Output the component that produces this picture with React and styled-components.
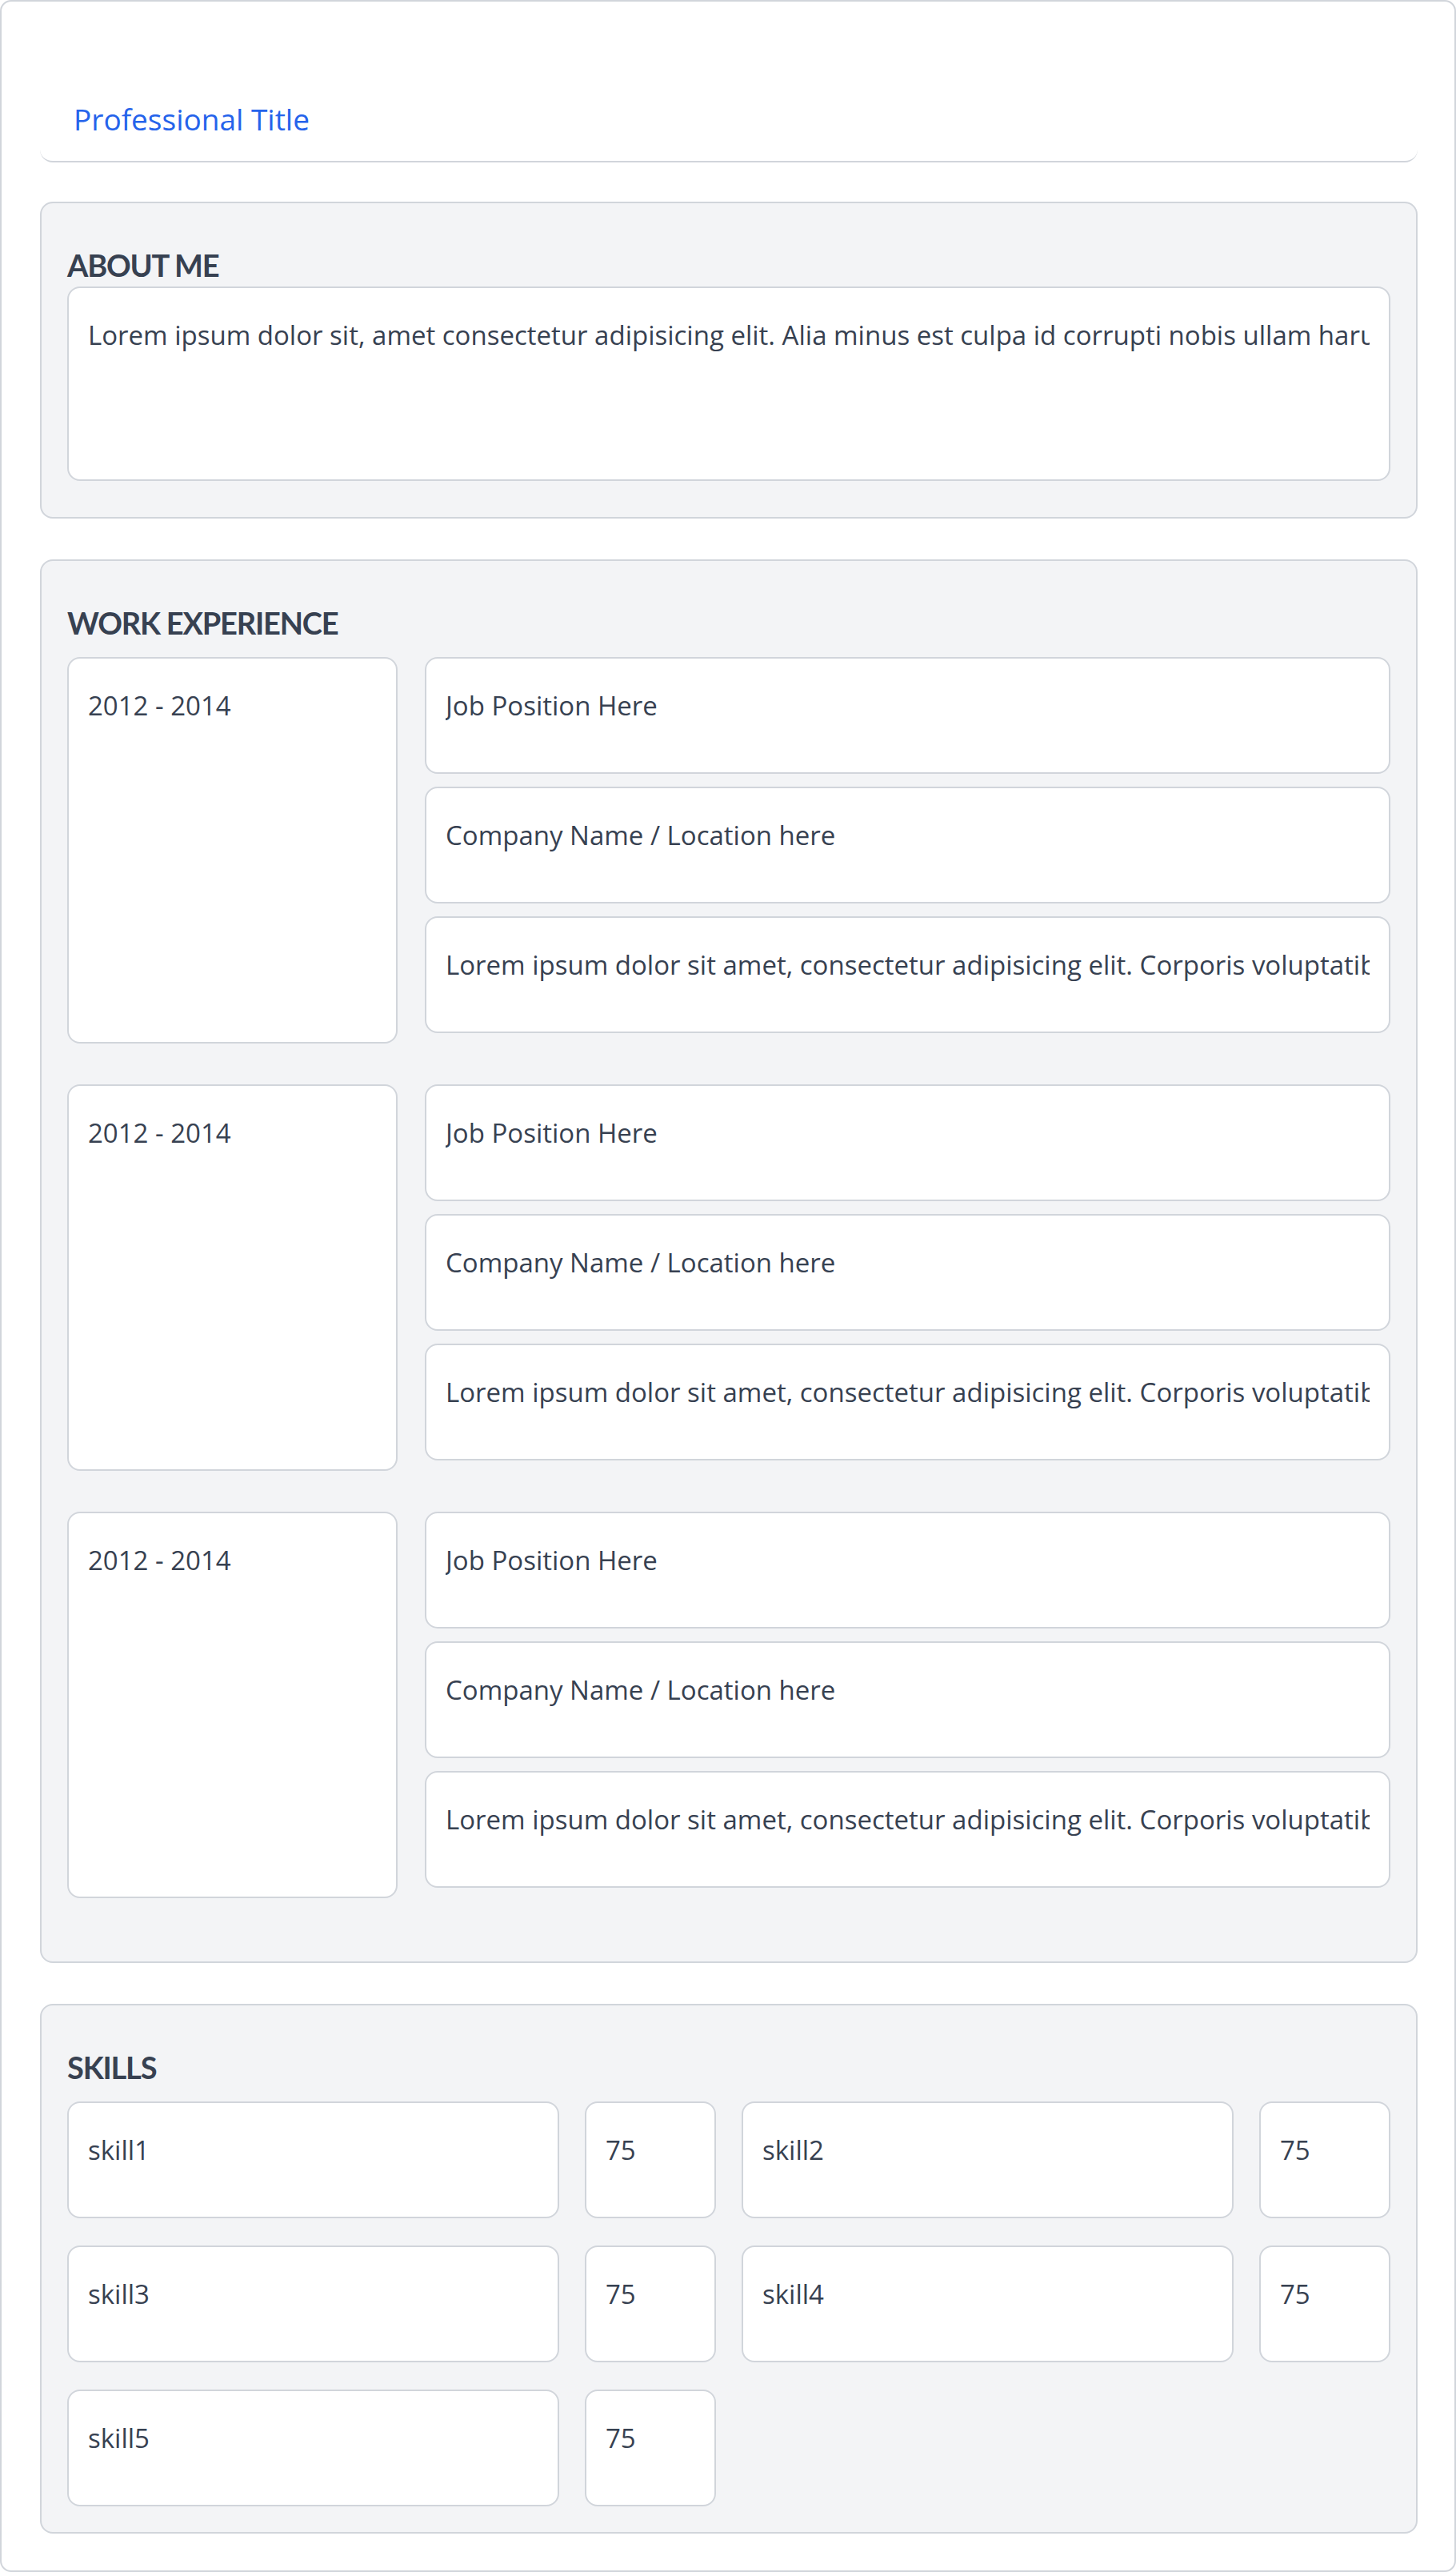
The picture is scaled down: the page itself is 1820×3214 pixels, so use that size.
import React from "react";
import styled, { createGlobalStyle } from "styled-components";

const GlobalStyle = createGlobalStyle`
  html, body {
    margin: 0;
    padding: 0;
    background: #ffffff;
  }
  body {
    font-family: "Open Sans", "Liberation Sans", sans-serif;
    color: #374151;
  }
`;

const Card = styled.div`
  box-sizing: border-box;
  width: 1820px;
  min-height: 3214px;
  border: 2px solid #d1d5db;
  border-radius: 14px;
  padding: 48px 46px 46px 48px;
  display: flex;
  flex-direction: column;
`;

const Header = styled.div`
  box-sizing: border-box;
  height: 153px;
  display: flex;
  align-items: flex-end;
  padding: 0 0 30px 42px;
  border-bottom: 2px solid #d1d5db;
  border-radius: 16px;
  margin-bottom: 49px;
`;

const Title = styled.div`
  font-size: 37px;
  line-height: 44px;
  color: #2563eb;
`;

const Section = styled.section`
  background: #f3f4f6;
  border: 2px solid #d1d5db;
  border-radius: 16px;
  padding: 32px;
  margin-bottom: 51px;

  &:last-child {
    margin-bottom: 0;
  }
`;

const Heading = styled.h2`
  margin: 21px 0 ${(p) => p.$gap - 1}px;
  font-family: Lato, "Open Sans", sans-serif;
  font-size: 38px;
  line-height: 48px;
  font-weight: 700;
  letter-spacing: -1.2px;
  color: #374151;
`;

const Field = styled.div`
  box-sizing: border-box;
  min-width: 0;
  height: ${(p) => (p.$h ? `${p.$h}px` : "auto")};
  background: #ffffff;
  border: 2px solid #d1d5db;
  border-radius: 16px;
  padding: 35px 24px 0;
  font-size: 33px;
  line-height: 48px;
  color: #374151;
  margin-bottom: ${(p) => p.$mb || 0}px;
`;

const FieldText = styled.div`
  white-space: nowrap;
  overflow: hidden;
`;

const Entry = styled.div`
  display: grid;
  grid-template-columns: 413px minmax(0, 1fr);
  column-gap: 34px;
  margin-bottom: 51px;

  &:last-child {
    margin-bottom: 47px;
  }
`;

const Stack = styled.div`
  min-width: 0;
  display: flex;
  flex-direction: column;
  gap: 16px;
`;

const SkillGrid = styled.div`
  display: grid;
  grid-template-columns: minmax(0, 1fr) 164px minmax(0, 1fr) 164px;
  column-gap: 32px;
  row-gap: 34px;
`;

const aboutText =
  "Lorem ipsum dolor sit, amet consectetur adipisicing elit. Alia minus est culpa id corrupti nobis ullam harum quae eveniet ratione.";
const jobText =
  "Lorem ipsum dolor sit amet, consectetur adipisicing elit. Corporis voluptatibus dolorum error quidem.";

const jobs = [1, 2, 3].map((id) => ({
  id,
  years: "2012 - 2014",
  position: "Job Position Here",
  company: "Company Name / Location here",
  desc: jobText,
}));

const skills = [
  { name: "skill1", level: 75 },
  { name: "skill2", level: 75 },
  { name: "skill3", level: 75 },
  { name: "skill4", level: 75 },
  { name: "skill5", level: 75 },
];

function Input({ children, ...rest }) {
  return (
    <Field {...rest}>
      <FieldText>{children}</FieldText>
    </Field>
  );
}

export default function App() {
  return (
    <>
      <GlobalStyle />
      <Card>
        <Header>
          <Title>Professional Title</Title>
        </Header>

        <Section>
          <Heading $gap={4}>ABOUT ME</Heading>
          <Input $h={243} $mb={13}>{aboutText}</Input>
        </Section>

        <Section>
          <Heading $gap={20}>WORK EXPERIENCE</Heading>
          {jobs.map((job) => (
            <Entry key={job.id}>
              <Input>{job.years}</Input>
              <Stack>
                <Input $h={146}>{job.position}</Input>
                <Input $h={146}>{job.company}</Input>
                <Input $h={146} $mb={13}>{job.desc}</Input>
              </Stack>
            </Entry>
          ))}
        </Section>

        <Section>
          <Heading $gap={20}>SKILLS</Heading>
          <SkillGrid>
            {skills.map((s) => (
              <React.Fragment key={s.name}>
                <Input $h={146}>{s.name}</Input>
                <Input $h={146}>{s.level}</Input>
              </React.Fragment>
            ))}
          </SkillGrid>
        </Section>
      </Card>
    </>
  );
}
